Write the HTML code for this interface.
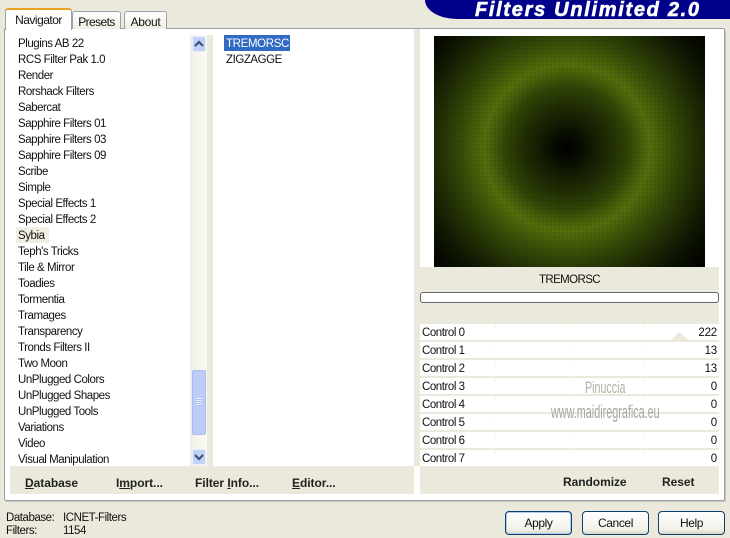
<!DOCTYPE html>
<html><head><meta charset="utf-8">
<style>
html,body{margin:0;padding:0}
body{width:730px;height:535px;overflow:hidden;background:#ebe9db;position:relative;font-family:"Liberation Sans",sans-serif;font-size:11.5px;color:#111;letter-spacing:-.45px}
div,span{position:absolute;white-space:nowrap}
.l{left:18px;height:16px;line-height:16px;margin-top:1px}
.tab{background:linear-gradient(#fff,#f0eee2);border:1px solid #9aa0a8;border-bottom:none;border-radius:3px 3px 0 0;text-align:center;box-sizing:border-box}
.cl{left:422px;line-height:16px;height:16px;margin-top:1px}
.cv{right:13px;line-height:16px;height:16px;text-align:right;margin-top:1px;letter-spacing:-.2px}
.row{left:420px;width:299px;height:16px;background:#fff}
.b{font-weight:bold;font-size:12px;color:#222;line-height:16px;letter-spacing:-.05px}
.btn{top:511px;height:24px;width:67px;box-sizing:border-box;border:1px solid #0a3f6e;border-radius:4px;background:linear-gradient(#fff,#f2f1e8 80%,#d8d5c6);text-align:center;line-height:23px;font-size:12px;letter-spacing:-.4px}
.tick{width:1px;height:3px;background:#f2f1ea}
</style></head><body>
<div style="left:425px;top:0;width:305px;height:19px;background:#00008a;border-bottom-left-radius:32px 19px"></div>
<div style="left:475px;top:-1px;height:22px;line-height:22px;font-size:20px;font-weight:bold;font-style:italic;color:#fff;letter-spacing:1.7px;-webkit-text-stroke:.6px #fff">Filters Unlimited 2.0</div>

<div style="left:4px;top:28px;width:719px;height:471px;background:#fff;border:1px solid #9aa0a8;border-radius:2px;box-shadow:1px 1px 0 #c8c6b8"></div>
<div class="tab" style="left:72px;top:11px;width:49px;height:18px;line-height:20px;font-size:12px;letter-spacing:-.6px">Presets</div>
<div class="tab" style="left:124px;top:11px;width:43px;height:18px;line-height:20px;font-size:12px;letter-spacing:-.3px">About</div>
<div class="tab" style="left:5px;top:8px;width:67px;height:22px;line-height:20px;font-size:12px;letter-spacing:-.5px;background:#fff;border-top:2px solid #f0a020;text-align:center;z-index:2;border-bottom:none">Navigator</div>

<div style="left:190px;top:35px;width:17px;height:431px;background:linear-gradient(90deg,#f0eee4,#fbfbf6)"></div>
<div style="left:207px;top:35px;width:6px;height:431px;background:#ebe9db"></div>
<div style="left:192px;top:36px;width:14px;height:16px;background:#c2d1f6;border:1px solid #e8eefb;box-sizing:border-box;border-radius:2px"></div>
<svg style="position:absolute;left:192px;top:36px" width="14" height="16"><path d="M3 10 L7 6 L11 10" fill="none" stroke="#3b4f80" stroke-width="2.2"/></svg>
<div style="left:192px;top:370px;width:14px;height:65px;background:#bccdf7;border:1px solid #a9bdee;box-sizing:border-box;border-radius:2px"></div>
<div style="left:196px;top:398px;width:6px;height:8px;background:repeating-linear-gradient(#eef2fd 0 1px,#a9bdee 1px 2px)"></div>
<div style="left:192px;top:449px;width:14px;height:16px;background:#c2d1f6;border:1px solid #e8eefb;box-sizing:border-box;border-radius:2px"></div>
<svg style="position:absolute;left:192px;top:449px" width="14" height="16"><path d="M3 6 L7 10 L11 6" fill="none" stroke="#3b4f80" stroke-width="2.2"/></svg>

<div style="left:16px;top:227px;width:33px;height:16px;background:#f1efe4"></div>
<div class="l" style="top:35px">Plugins AB 22</div>
<div class="l" style="top:51px">RCS Filter Pak 1.0</div>
<div class="l" style="top:67px">Render</div>
<div class="l" style="top:83px">Rorshack Filters</div>
<div class="l" style="top:99px">Sabercat</div>
<div class="l" style="top:115px">Sapphire Filters 01</div>
<div class="l" style="top:131px">Sapphire Filters 03</div>
<div class="l" style="top:147px">Sapphire Filters 09</div>
<div class="l" style="top:163px">Scribe</div>
<div class="l" style="top:179px">Simple</div>
<div class="l" style="top:195px">Special Effects 1</div>
<div class="l" style="top:211px">Special Effects 2</div>
<div class="l" style="top:227px">Sybia</div>
<div class="l" style="top:243px">Teph's Tricks</div>
<div class="l" style="top:259px">Tile &amp; Mirror</div>
<div class="l" style="top:275px">Toadies</div>
<div class="l" style="top:291px">Tormentia</div>
<div class="l" style="top:307px">Tramages</div>
<div class="l" style="top:323px">Transparency</div>
<div class="l" style="top:339px">Tronds Filters II</div>
<div class="l" style="top:355px">Two Moon</div>
<div class="l" style="top:371px">UnPlugged Colors</div>
<div class="l" style="top:387px">UnPlugged Shapes</div>
<div class="l" style="top:403px">UnPlugged Tools</div>
<div class="l" style="top:419px">Variations</div>
<div class="l" style="top:435px">Video</div>
<div class="l" style="top:451px">Visual Manipulation</div>

<div style="left:224px;top:35px;width:66px;height:16px;line-height:18px;background:#316ac5;color:#fff;padding-left:2px;box-sizing:border-box;letter-spacing:-.35px">TREMORSC</div>
<div style="left:226px;top:52px;line-height:16px">ZIGZAGGE</div>

<div style="left:414px;top:29px;width:6px;height:437px;background:#ebe9db"></div>
<div style="left:10px;top:466px;width:404px;height:28px;background:#ebe9db"></div>
<div class="b" style="left:25px;top:475px"><u>D</u>atabase</div>
<div class="b" style="left:116px;top:475px">I<u>m</u>port...</div>
<div class="b" style="left:195px;top:475px">Filter <u>I</u>nfo...</div>
<div class="b" style="left:292px;top:475px"><u>E</u>ditor...</div>

<div style="left:434px;top:36px;width:271px;height:231px;background:radial-gradient(circle at 133px 112px,#000 0,#060a00 12px,#141e02 28px,#223004 45px,#324606 62px,#46600a 74px,#566f0b 83px,#4a620a 92px,#3a5008 104px,#2c3d06 118px,#1e2b04 133px,#101802 150px,#070b00 165px,#000 185px)"></div>
<div style="left:434px;top:36px;width:271px;height:231px;background:repeating-linear-gradient(90deg,rgba(0,0,0,.04) 0 2px,transparent 2px 4px),repeating-linear-gradient(rgba(0,0,0,.04) 0 2px,transparent 2px 4px)"></div>

<div style="left:420px;top:267px;width:299px;height:57px;background:#ebe9db"></div>
<div style="left:420px;top:272px;width:299px;text-align:center;line-height:16px;font-size:11.5px;letter-spacing:-.6px">TREMORSC</div>
<div style="left:420px;top:292px;width:299px;height:11px;box-sizing:border-box;background:#fff;border:1px solid #666;border-radius:3px"></div>

<div style="left:420px;top:324px;width:299px;height:142px;background:#ebe9db"></div>
<div class="row" style="top:324px"></div>
<div class="row" style="top:342px"></div>
<div class="row" style="top:360px"></div>
<div class="row" style="top:378px"></div>
<div class="row" style="top:396px"></div>
<div class="row" style="top:414px"></div>
<div class="row" style="top:432px"></div>
<div class="row" style="top:450px"></div>
<div class="tick" style="left:495px;top:325px"></div><div class="tick" style="left:570px;top:325px"></div><div class="tick" style="left:644px;top:325px"></div>
<div class="tick" style="left:495px;top:343px"></div><div class="tick" style="left:570px;top:343px"></div><div class="tick" style="left:644px;top:343px"></div>
<div class="tick" style="left:495px;top:361px"></div><div class="tick" style="left:570px;top:361px"></div><div class="tick" style="left:644px;top:361px"></div>
<div class="tick" style="left:495px;top:379px"></div><div class="tick" style="left:570px;top:379px"></div><div class="tick" style="left:644px;top:379px"></div>
<div class="tick" style="left:495px;top:397px"></div><div class="tick" style="left:570px;top:397px"></div><div class="tick" style="left:644px;top:397px"></div>
<div class="tick" style="left:495px;top:415px"></div><div class="tick" style="left:570px;top:415px"></div><div class="tick" style="left:644px;top:415px"></div>
<div class="tick" style="left:495px;top:433px"></div><div class="tick" style="left:570px;top:433px"></div><div class="tick" style="left:644px;top:433px"></div>
<div class="tick" style="left:495px;top:451px"></div><div class="tick" style="left:570px;top:451px"></div><div class="tick" style="left:644px;top:451px"></div>
<svg style="position:absolute;left:670px;top:332px" width="20" height="9"><path d="M1 8 L9 0 L18 8 Z" fill="#ebe9db"/></svg>

<div class="cl" style="top:324px">Control 0</div><div class="cv" style="top:324px">222</div>
<div class="cl" style="top:342px">Control 1</div><div class="cv" style="top:342px">13</div>
<div class="cl" style="top:360px">Control 2</div><div class="cv" style="top:360px">13</div>
<div class="cl" style="top:378px">Control 3</div><div class="cv" style="top:378px">0</div>
<div class="cl" style="top:396px">Control 4</div><div class="cv" style="top:396px">0</div>
<div class="cl" style="top:414px">Control 5</div><div class="cv" style="top:414px">0</div>
<div class="cl" style="top:432px">Control 6</div><div class="cv" style="top:432px">0</div>
<div class="cl" style="top:450px">Control 7</div><div class="cv" style="top:450px">0</div>

<div style="left:585px;top:378px;font-size:17px;line-height:20px;color:#b0b0a6;letter-spacing:0;transform:scaleX(.63);transform-origin:0 0">Pinuccia</div>
<div style="left:551px;top:402px;font-size:18px;line-height:20px;color:#a5a59b;letter-spacing:0;transform:scaleX(.6);transform-origin:0 0">www.maidiregrafica.eu</div>

<div style="left:420px;top:466px;width:299px;height:28px;background:#ebe9db"></div>
<div class="b" style="left:563px;top:474px">Randomize</div>
<div class="b" style="left:662px;top:474px">Reset</div>

<div style="left:6px;top:511px;line-height:14px">Database:</div>
<div style="left:63px;top:511px;line-height:14px">ICNET-Filters</div>
<div style="left:6px;top:524px;line-height:14px">Filters:</div>
<div style="left:63px;top:524px;line-height:14px">1154</div>

<div class="btn" style="left:505px;box-shadow:inset 0 0 0 1px #b5cbea">Apply</div>
<div class="btn" style="left:582px">Cancel</div>
<div class="btn" style="left:658px">Help</div>
</body></html>
